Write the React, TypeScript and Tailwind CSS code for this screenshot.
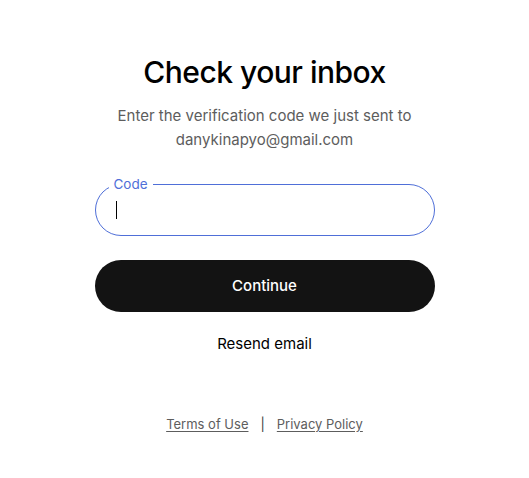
import { useState } from 'react';

export default function App() {
  const [code, setCode] = useState('');

  return (
    <div className="min-h-screen w-full bg-white flex flex-col items-center font-['Inter',sans-serif] text-[#0d0d0d]">
      <div className="w-[340px] flex flex-col items-center pt-[52px]">
        <h1 className="text-[30px] leading-[40px] font-medium tracking-[-0.5px] text-black">Check your inbox</h1>
        <p className="mt-[12px] text-center text-[15px] leading-[24px] text-[#5d5d5d]">
          Enter the verification code we just sent to
          <br />
          danykinapyo@gmail.com
        </p>

        {/* Code field with notched label */}
        <div className="relative mt-[32px] w-full h-[52px] rounded-full border border-[#4f6fd8] flex items-center px-[20px]">
          <span className="absolute left-[13px] -top-[9px] bg-white px-[5px] text-[13.5px] leading-[16px] text-[#4f6fd8]">
            Code
          </span>
          {code === '' && <span className="w-[1px] h-[18px] bg-black" />}
          <input
            autoFocus
            value={code}
            onChange={(e) => setCode(e.target.value)}
            className="flex-1 h-[34px] bg-transparent outline-none text-[16px] caret-black"
          />
        </div>

        <button className="mt-[24px] w-full h-[52px] rounded-full bg-[#131313] text-white text-[15px] font-medium">
          Continue
        </button>

        <button className="mt-[21px] text-[15px] leading-[22px] text-black">Resend email</button>

        <div className="mt-[60px] flex items-center gap-[12px] text-[13px] text-[#5d5d5d]">
          <a className="underline underline-offset-2" href="#">Terms of Use</a>
          <span className="text-[#3d3d3d]">|</span>
          <a className="underline underline-offset-2" href="#">Privacy Policy</a>
        </div>
      </div>
    </div>
  );
}
